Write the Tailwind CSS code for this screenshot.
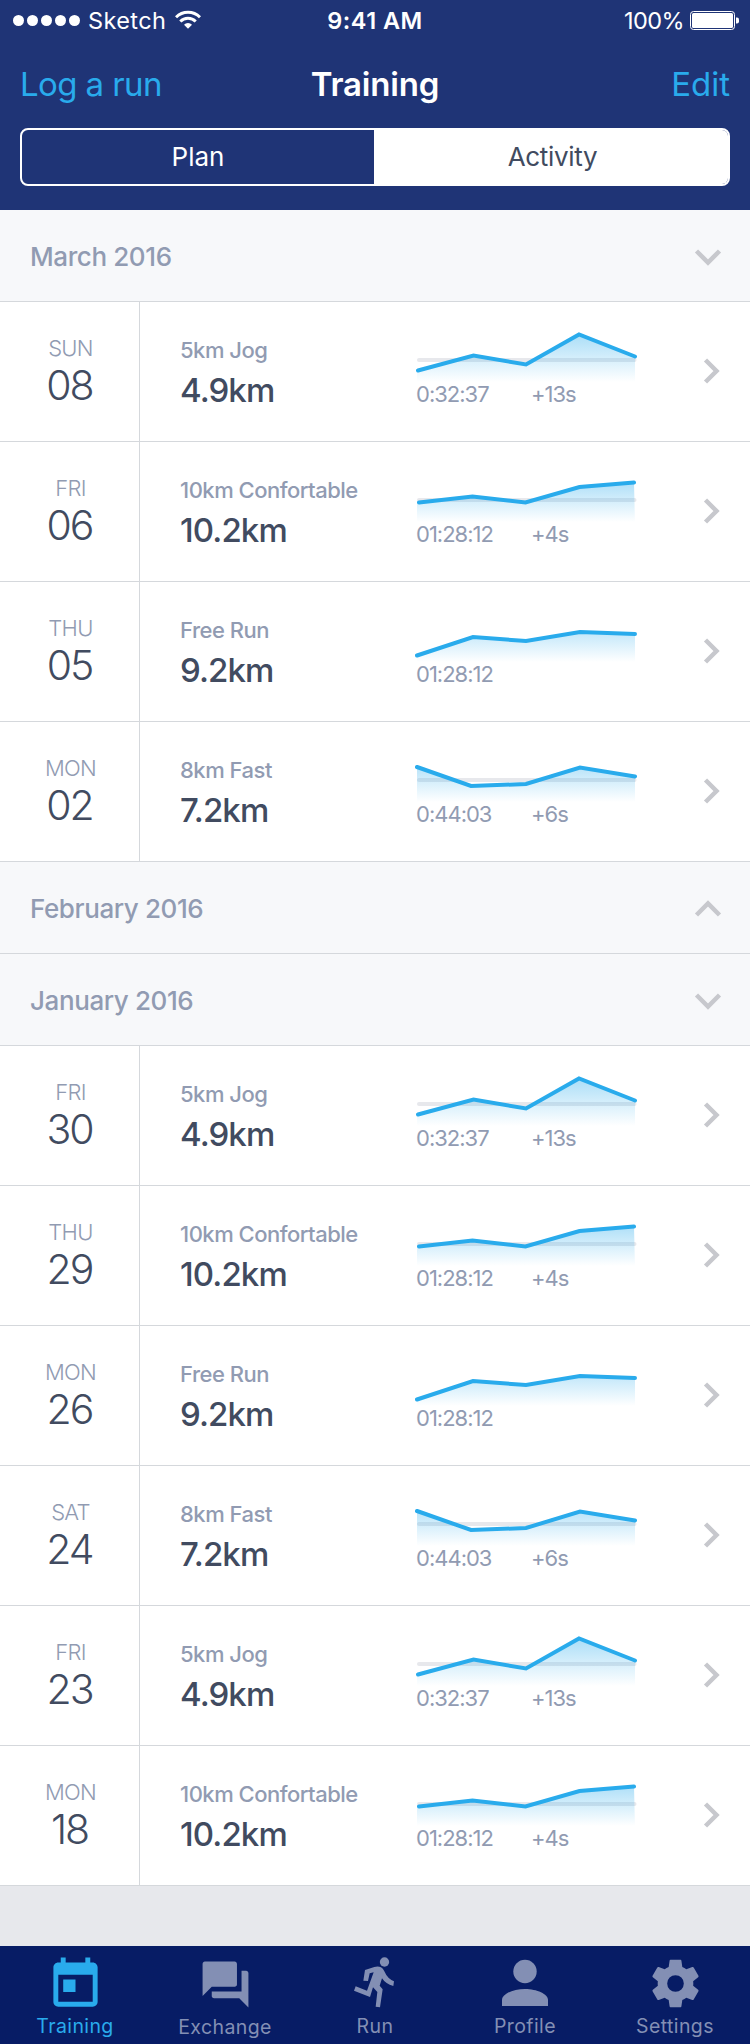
<!DOCTYPE html>
<html lang="en">
<head>
<meta charset="utf-8">
<title>Training</title>
<script src="https://cdn.jsdelivr.net/npm/@tailwindcss/browser@4"></script>
</head>
<body class="w-[750px] bg-[#e7e8ec] font-['Inter',sans-serif]">
<svg class="absolute h-0 w-0">
  <defs>
    <linearGradient id="fade" gradientUnits="userSpaceOnUse" x1="0" y1="32" x2="0" y2="80"><stop offset="0" stop-color="#29abec" stop-opacity=".4"/><stop offset="1" stop-color="#29abec" stop-opacity="0"/></linearGradient>
    <linearGradient id="fadeLow" gradientUnits="userSpaceOnUse" x1="0" y1="42" x2="0" y2="80"><stop offset="0" stop-color="#29abec" stop-opacity=".36"/><stop offset="1" stop-color="#29abec" stop-opacity="0"/></linearGradient>
  </defs>
</svg>

<header class="h-[210px] bg-[#1f3476] text-white">
  <div class="grid h-10 grid-cols-3 items-center pl-[13px] pr-[11px]">
    <div class="flex items-center">
      <svg class="h-[41px] w-[67px]" viewBox="0 0 67 41" fill="#fff"><circle cx="5.5" cy="20.5" r="5.5"/><circle cx="19.5" cy="20.5" r="5.5"/><circle cx="33.5" cy="20.5" r="5.5"/><circle cx="47.5" cy="20.5" r="5.5"/><circle cx="61.5" cy="20.5" r="5.5"/></svg>
      <span class="ml-2 w-[87px] text-[23.5px] leading-[41px] tracking-[0.4px]">Sketch</span>
      <svg class="h-[41px] w-[26px]" viewBox="0 0 26 41" fill="none" stroke="#fff" stroke-width="3"><path d="M1 17.3a17 17 0 0 1 24 0"/><path d="M5.3 21.5a11 11 0 0 1 15.4 0"/><path d="M13 28.8l-4-4a5.6 5.6 0 0 1 8 0z" fill="#fff" stroke="none"/></svg>
    </div>
    <div class="pr-[2px] text-center text-[23.500px] font-semibold leading-[41px] tracking-[0.5px]">9:41 AM</div>
    <div class="flex items-center justify-end">
      <span class="mr-[6px] text-[23.5px] leading-[41px] tracking-[-0.6px]">100%</span>
      <svg class="h-[41px] w-[49px]" viewBox="0 0 49 41"><rect x=".5" y="11.5" width="44" height="18" rx="3" fill="none" stroke="#fff"/><rect x="2" y="13" width="41" height="15" rx="1.5" fill="#fff"/><path d="M46 17.5h1a2 2 0 0 1 2 2v2a2 2 0 0 1-2 2h-1z" fill="#fff"/></svg>
    </div>
  </div>
  <nav class="grid h-[88px] grid-cols-3 items-center px-5">
    <a class="pb-px text-[33px] leading-10 tracking-[-0.6px] text-[#29abec]">Log a run</a>
    <h1 class="pb-px text-center text-[33px] font-semibold leading-10 tracking-[-0.2px]">Training</h1>
    <a class="pb-px text-right text-[33px] leading-10 text-[#29abec]">Edit</a>
  </nav>
  <div class="mx-5 flex h-[58px] overflow-hidden rounded-lg border-2 border-white text-[26px]">
    <div class="flex w-[352px] items-center justify-center pb-px">Plan</div>
    <div class="flex flex-1 items-center justify-center bg-white pb-px pl-[3px] tracking-[-0.3px] text-[#414b60]">Activity</div>
  </div>
</header>

<main id="log"></main>

<footer class="mt-[60px] grid h-[98px] grid-cols-5 bg-[#071c65] text-[19.5px] tracking-[0.4px] text-[#838fb4]">
  <div class="flex flex-col items-center text-[#29abec]">
    <svg class="mt-[9px] h-[59px] w-[59px]" viewBox="0 0 24 24" fill="currentColor"><path d="M19 3h-1V1h-2v2H8V1H6v2H5c-1.110 0-1.990.9-1.990 2L3 19c0 1.100.89 2 2 2h14c1.100 0 2-.9 2-2V5c0-1.100-.9-2-2-2zm0 16H5V8h14v11zM7 10h5v5H7z"/></svg>
    <span class="leading-6">Training</span>
  </div>
  <div class="flex flex-col items-center">
    <svg class="mb-[3px] mt-[11px] h-[55px] w-[55px]" viewBox="0 0 24 24" fill="currentColor"><path d="M21 6h-2v9H6v2c0 .55.45 1 1 1h11l4 4V7c0-.55-.45-1-1-1zm-4 6V3c0-.55-.45-1-1-1H3c-.55 0-1 .45-1 1v14l4-4h10c.55 0 1-.45 1-1z"/></svg>
    <span class="leading-6">Exchange</span>
  </div>
  <div class="flex flex-col items-center">
    <svg class="h-[68px] w-[60px]" viewBox="0 0 180 204" fill="currentColor"><circle cx="118.500" cy="48" r="14"/><path d="M60 72L88 63Q100 60 108 64Q114 67 118 76Q128 99 147 106L145 120Q122 114 111 97L104 119L113 130L105 184L92 182L97 138L84 124L75 153L27 134L32 121L66 134L86 79L74 82L69 105L55 104Z"/></svg>
    <span class="leading-6">Run</span>
  </div>
  <div class="flex flex-col items-center">
    <svg class="mb-[2px] mt-2 h-[58px] w-[58px]" viewBox="0 0 58 58" fill="currentColor"><circle cx="29" cy="17.500" r="11.700"/><path d="M6 52v-6c0-6 11-11 23-11s23 5 23 11v6z"/></svg>
    <span class="leading-6">Profile</span>
  </div>
  <div class="flex flex-col items-center">
    <svg class="mb-[2px] mt-[9px] h-[57px] w-[57px]" viewBox="0 0 24 24" fill="currentColor"><path d="M19.430 12.980c.04-.32.07-.64.07-.98s-.03-.66-.07-.98l2.110-1.650c.19-.15.24-.42.12-.64l-2-3.460c-.12-.22-.39-.3-.61-.22l-2.490 1c-.52-.4-1.080-.73-1.690-.98l-.38-2.650C14.460 2.180 14.250 2 14 2h-4c-.25 0-.46.18-.49.42l-.38 2.650c-.61.25-1.170.59-1.690.98l-2.490-1c-.23-.09-.49 0-.61.22l-2 3.460c-.13.22-.07.49.12.64l2.110 1.650c-.04.32-.07.65-.07.98s.03.66.07.98l-2.110 1.650c-.19.15-.24.42-.12.64l2 3.460c.12.22.39.3.61.22l2.490-1c.52.4 1.080.73 1.690.98l.38 2.650c.03.24.24.42.49.42h4c.25 0 .46-.18.49-.42l.38-2.650c.61-.25 1.170-.59 1.690-.98l2.490 1c.23.09.49 0 .61-.22l2-3.460c.12-.22.07-.49-.12-.64l-2.110-1.650zM12 15.500A3.500 3.500 0 1 1 12 8.500a3.500 3.500 0 0 1 0 7z"/></svg>
    <span class="leading-6">Settings</span>
  </div>
</footer>

<script>
const runs = {
  jog:  { name: '5km Jog', dist: '4.9km', time: '0:32:37', diff: '+13s', avg: true, fill: 'fade', pts: '3,68.5 58.5,53.5 111,62.5 164,32.5 220,54.5' },
  comf: { name: '10km Confortable', dist: '10.2km', time: '01:28:12', diff: '+4s', avg: true, fill: 'fadeLow', pts: '4,60.5 57.5,54.5 110.5,60.5 164.5,45 219,40.5' },
  free: { name: 'Free Run', dist: '9.2km', time: '01:28:12', diff: '', avg: false, fill: 'fadeLow', pts: '2,73.5 58,55 111,59 165,50 220,52' },
  fast: { name: '8km Fast', dist: '7.2km', time: '0:44:03', diff: '+6s', avg: true, fill: 'fadeLow', pts: '2,45 56,64 111,62 165,45.5 220,54.5' }
};
const month = (label, open) => `
<div class="flex h-[92px] items-center justify-between border-b border-[#d5d8dc] bg-[#f7f8fa] pl-[30px] pr-7 pt-[2px]">
  <h2 class="text-[26px] font-[450] leading-8 tracking-[-0.4px] text-[#919bb2]">${label}</h2>
  <svg class="h-[26px] w-[28px]" viewBox="0 0 28 26" fill="none" stroke="#c7c8cd" stroke-width="4.5"><path d="${open ? 'M2.5 7L14 18.5 25.5 7' : 'M2.5 19L14 7.5 25.5 19'}"/></svg>
</div>`;
const row = (day, num, r) => `
<div class="flex h-[140px] border-b border-[#d5d8dc] bg-white">
  <div class="w-[140px] border-r border-[#d5d8dc] pt-[30px] text-center">
    <div class="pl-[2px] text-[22px] font-[350] leading-8 tracking-[-0.7px] text-[#919bb2]">${day}</div>
    <div class="text-[41px] font-[320] leading-[42px] tracking-[-2px] text-[#414b60]">${num}</div>
  </div>
  <div class="w-[275px] pl-10 pt-8">
    <div class="whitespace-nowrap text-[22px] font-[450] leading-8 tracking-[-0.5px] text-[#919bb2]">${r.name}</div>
    <div class="text-[33px] font-[470] leading-[48px] tracking-[-0.9px] text-[#414b60]">${r.dist}</div>
  </div>
  <div class="w-[288px]">
    <svg class="block h-[82px] w-[224px]" viewBox="0 0 224 82">
      ${r.avg ? '<path d="M4 58H219.5" stroke="#e7e8ec" stroke-width="4" stroke-linecap="round"/>' : ''}
      <polygon points="2,82 2,${r.pts.split(' ')[0].split(',')[1]} ${r.pts} 220,82" fill="url(#${r.fill})"/>
      <polyline points="${r.pts}" fill="none" stroke="#29abec" stroke-width="4" stroke-linecap="round"/>
    </svg>
    <div class="flex pl-px text-[22px] leading-5 tracking-[-1px] text-[#919bb2]">
      <span class="w-[115px]">${r.time}</span><span>${r.diff}</span>
    </div>
  </div>
  <svg class="mt-[54px] h-[28px] w-[18px]" viewBox="0 0 18 28" fill="none" stroke="#c7c8cd" stroke-width="4.5"><path d="M2.5 4L13.500 15 2.5 26"/></svg>
</div>`;
document.getElementById('log').innerHTML =
  month('March 2016', true) +
  row('SUN', '08', runs.jog) + row('FRI', '06', runs.comf) + row('THU', '05', runs.free) + row('MON', '02', runs.fast) +
  month('February 2016', false) + month('January 2016', true) +
  row('FRI', '30', runs.jog) + row('THU', '29', runs.comf) + row('MON', '26', runs.free) +
  row('SAT', '24', runs.fast) + row('FRI', '23', runs.jog) + row('MON', '18', runs.comf);
</script>
</body>
</html>
